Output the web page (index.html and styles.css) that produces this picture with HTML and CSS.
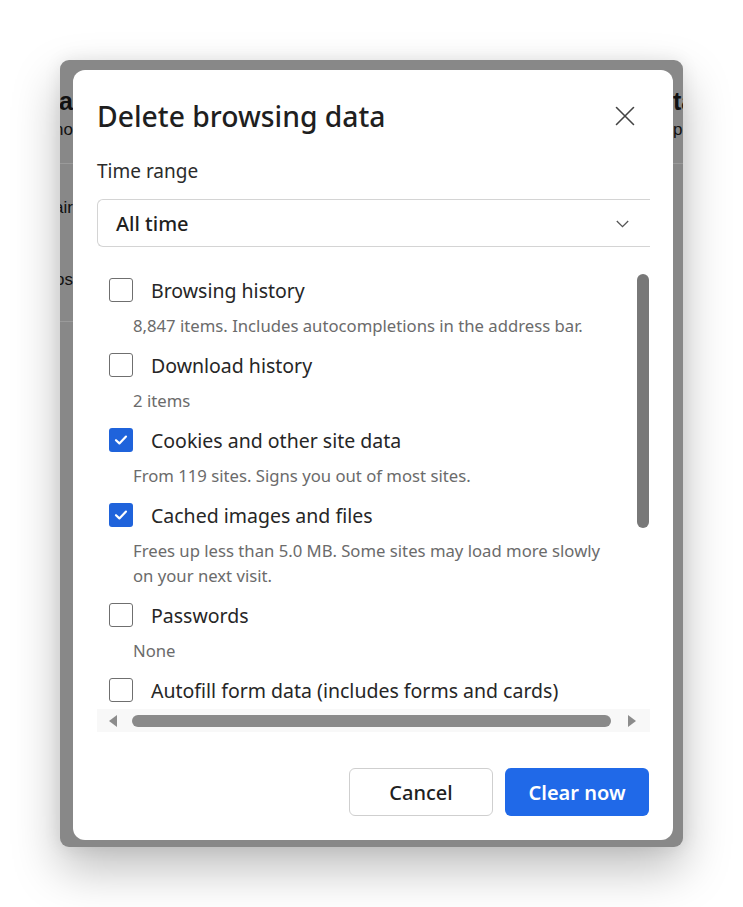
FILE: index.html
```html
<!DOCTYPE html>
<html lang="en">
<head>
<meta charset="utf-8">
<title>Delete browsing data</title>
<link rel="stylesheet" href="styles.css">
</head>
<body>
<div class="stage">
  <div class="window">
    <div class="bgpage">
      <div class="strip strip-left">
        <div class="bg-title">Data</div>
        <div class="bg-sub">Techno</div>
        <div class="bg-rule"></div>
        <div class="bg-row r1">Repair</div>
        <div class="bg-row r2">Photos</div>
        <div class="bg-rule r3"></div>
      </div>
      <div class="strip strip-right">
        <div class="bg-title">tab</div>
        <div class="bg-sub">per</div>
        <div class="bg-rule"></div>
      </div>
    </div>

    <div class="dialog" role="dialog" aria-label="Delete browsing data">
      <div class="header">
        <h1 class="title">Delete browsing data</h1>
        <button class="close" aria-label="Close">
          <svg width="20" height="20" viewBox="0 0 20 20"><path d="M1.5 1.5 L18.5 18.5 M18.5 1.5 L1.5 18.5" stroke="#444" stroke-width="1.6" fill="none" stroke-linecap="round"/></svg>
        </button>
      </div>

      <div class="field-label">Time range</div>
      <div class="select">
        <span class="select-value">All time</span>
        <svg class="chev" width="13" height="8" viewBox="0 0 13 8"><path d="M0.8 1 L6.5 6.7 L12.2 1" stroke="#555" stroke-width="1.3" fill="none"/></svg>
      </div>

      <div class="scroller">
        <div class="list">
          <div class="item">
            <div class="row"><span class="cb"></span><span class="label">Browsing history</span></div>
            <div class="sub">8,847 items. Includes autocompletions in the address bar.</div>
          </div>
          <div class="item">
            <div class="row"><span class="cb"></span><span class="label">Download history</span></div>
            <div class="sub">2 items</div>
          </div>
          <div class="item">
            <div class="row"><span class="cb checked"><svg width="14" height="12" viewBox="0 0 14 12"><path d="M2 6.2 L5.4 9.4 L12 2.6" stroke="#fff" stroke-width="2.2" fill="none" stroke-linecap="round" stroke-linejoin="round"/></svg></span><span class="label">Cookies and other site data</span></div>
            <div class="sub">From 119 sites. Signs you out of most sites.</div>
          </div>
          <div class="item">
            <div class="row"><span class="cb checked"><svg width="14" height="12" viewBox="0 0 14 12"><path d="M2 6.2 L5.4 9.4 L12 2.6" stroke="#fff" stroke-width="2.2" fill="none" stroke-linecap="round" stroke-linejoin="round"/></svg></span><span class="label">Cached images and files</span></div>
            <div class="sub">Frees up less than 5.0 MB. Some sites may load more slowly<br>on your next visit.</div>
          </div>
          <div class="item">
            <div class="row"><span class="cb"></span><span class="label">Passwords</span></div>
            <div class="sub">None</div>
          </div>
          <div class="item">
            <div class="row"><span class="cb"></span><span class="label">Autofill form data (includes forms and cards)</span></div>
            <div class="sub">Addresses and payment methods</div>
          </div>
        </div>
        <div class="vtrack"><div class="vthumb"></div></div>
        <div class="htrack">
          <span class="arrow-left"></span>
          <div class="hthumb"></div>
          <span class="arrow-right"></span>
        </div>
      </div>

      <div class="actions">
        <button class="btn btn-cancel">Cancel</button>
        <button class="btn btn-primary">Clear now</button>
      </div>
    </div>
  </div>
</div>
</body>
</html>
```

FILE: styles.css
```css
* { box-sizing: border-box; }

html, body {
  margin: 0;
  padding: 0;
  background: #ffffff;
}

body {
  width: 743px;
  height: 907px;
  overflow: hidden;
  font-family: "Noto Sans", "Open Sans", sans-serif;
  color: #202124;
}

.stage {
  padding: 60px 0 0 60px;
}

.window {
  position: relative;
  width: 623px;
  height: 787px;
  background: #888888;
  border-radius: 9px;
  overflow: hidden;
  box-shadow: 0 22px 48px rgba(0, 0, 0, 0.26), 0 0 18px rgba(0, 0, 0, 0.08);
}

/* dimmed background page, visible only at the strips */
.bgpage {
  display: flex;
  justify-content: space-between;
  height: 100%;
}

.strip {
  display: flex;
  flex-direction: column;
  overflow: hidden;
  padding-top: 26px;
  color: #111;
}

.strip-left {
  width: 13px;
  align-items: flex-end;
}

.strip-right {
  width: 10px;
  align-items: flex-start;
}

.bg-title {
  font-family: "Liberation Sans", Arial, sans-serif;
  font-weight: 700;
  font-size: 25px;
  line-height: 30px;
  white-space: nowrap;
}

.bg-sub {
  font-family: "Liberation Sans", Arial, sans-serif;
  font-size: 17px;
  line-height: 22px;
  margin-top: 3px;
  white-space: nowrap;
}

.bg-rule {
  width: 200px;
  height: 1px;
  background: #9a9a9a;
  margin-top: 22px;
  flex: none;
}

.bg-row {
  font-family: "Liberation Sans", Arial, sans-serif;
  font-size: 17px;
  line-height: 22px;
  white-space: nowrap;
}

.r1 { margin-top: 33px; }
.r2 { margin-top: 50px; }
.r3 { margin-top: 30px; }

/* dialog */
.dialog {
  position: absolute;
  left: 13px;
  top: 10px;
  width: 600px;
  height: 770px;
  background: #ffffff;
  border-radius: 12px;
  padding: 28px 23px 24px 24px;
  display: flex;
  flex-direction: column;
  overflow: hidden;
}

.header {
  display: flex;
  align-items: center;
  justify-content: space-between;
  height: 36px;
}

.title {
  margin: 0;
  font-size: 28.3px;
  font-weight: 500;
  line-height: 36px;
  color: #1f1f1f;
}

.close {
  border: 0;
  background: none;
  padding: 0;
  width: 20px;
  height: 20px;
  margin-right: 15px;
  display: flex;
}

.field-label {
  margin-top: 24px;
  font-size: 19px;
  line-height: 26px;
  color: #2b2b2b;
}

.select {
  margin-top: 15px;
  height: 48px;
  border: 1px solid #d4d4d4;
  border-right: 0;
  border-radius: 6px 0 0 6px;
  display: flex;
  align-items: center;
  justify-content: space-between;
  padding: 0 21px 0 18px;
}

.select-value {
  font-size: 20px;
  font-weight: 500;
  color: #1f1f1f;
}

.chev {
  margin-top: 2px;
}

.scroller {
  margin-top: 15px;
  height: 470px;
  display: grid;
  grid-template-columns: 1fr 13px;
  grid-template-rows: 1fr 23px;
}

.list {
  overflow: hidden;
  padding: 13px 0 0 12px;
  white-space: nowrap;
}

.item {
  margin-bottom: 12px;
}

.row {
  display: flex;
  align-items: center;
  height: 30px;
}

.cb {
  width: 24px;
  height: 24px;
  border: 1.5px solid #6f6f6f;
  border-radius: 3px;
  flex: none;
  display: flex;
  align-items: center;
  justify-content: center;
}

.cb.checked {
  border: 0;
  background: #1f63db;
}

.label {
  margin-left: 18px;
  font-size: 19.5px;
  color: #262626;
}

.sub {
  padding: 8px 0 0 24px;
  font-size: 16.7px;
  line-height: 25px;
  color: #6b6b6b;
}

.vtrack {
  padding-top: 12px;
}

.vthumb {
  width: 12px;
  height: 254px;
  background: #787878;
  border-radius: 6px;
}

.htrack {
  grid-column: 1 / 3;
  background: #f8f8f8;
  display: flex;
  align-items: center;
  padding: 0 14px 0 12px;
}

.arrow-left,
.arrow-right {
  width: 0;
  height: 0;
  border-top: 6px solid transparent;
  border-bottom: 6px solid transparent;
  flex: none;
}

.arrow-left {
  border-right: 8px solid #8c8c8c;
}

.arrow-right {
  border-left: 8px solid #8c8c8c;
}

.hthumb {
  flex: 1;
  height: 12px;
  margin: 0 17px 0 15px;
  background: #8a8a8a;
  border-radius: 6px;
}

.actions {
  margin-top: auto;
  margin-right: 1px;
  display: flex;
  justify-content: flex-end;
  gap: 12px;
}

.btn {
  width: 144px;
  height: 48px;
  border-radius: 6px;
  font-family: "Noto Sans", "Open Sans", sans-serif;
  font-size: 20px;
  font-weight: 500;
  cursor: pointer;
}

.btn-cancel {
  background: #fff;
  border: 1px solid #cfcfcf;
  color: #1f1f1f;
}

.btn-primary {
  background: #2069e8;
  border: 0;
  color: #fff;
  font-weight: 600;
}
```
